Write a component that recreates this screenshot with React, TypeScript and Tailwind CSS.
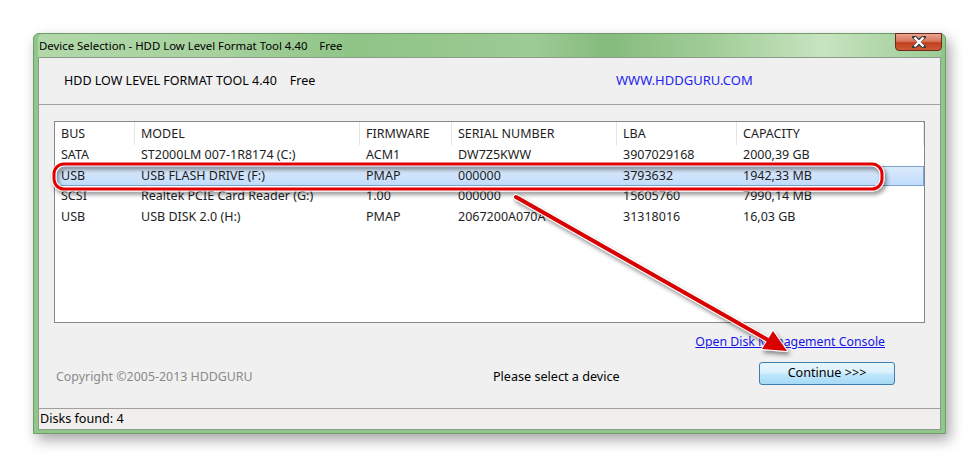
import React from "react";

const rows = [
  { bus: "SATA", model: "ST2000LM 007-1R8174 (C:)", fw: "ACM1", sn: "DW7Z5KWW", lba: "3907029168", cap: "2000,39 GB" },
  { bus: "USB", model: "USB FLASH DRIVE (F:)", fw: "PMAP", sn: "000000", lba: "3793632", cap: "1942,33 MB", sel: true },
  { bus: "SCSI", model: "Realtek PCIE Card Reader (G:)", fw: "1.00", sn: "000000", lba: "15605760", cap: "7990,14 MB" },
  { bus: "USB", model: "USB DISK 2.0 (H:)", fw: "PMAP", sn: "2067200A070A", lba: "31318016", cap: "16,03 GB" },
];

const cols = "grid grid-cols-[80px_225px_92px_165px_120px_1fr]";

export default function App() {
  return (
    <div className="relative w-[980px] h-[468px] overflow-hidden bg-white pl-[33px] pt-[33px] font-['Noto_Sans',sans-serif] text-[12.5px] text-[#1e1e1e]">
      <div className="relative flex h-[401px] w-[913px] flex-col rounded-t-[6px] border border-[#6f9c69] bg-[#8fc68a] px-[4px] pb-[3px] shadow-[4px_6px_14px_rgba(0,0,0,0.35)]">
        {/* title bar */}
        <div className="flex h-[23px] items-center rounded-t-[5px] bg-[linear-gradient(90deg,#b2d8aa_0%,#a6d19d_20%,#8fc487_35%,#9dcb94_55%,#85bb7d_63%,#a2ce99_75%,#c7e4c0_87%,#9ccb93_100%)] pl-[1px] pt-[1px]">
          <span className="text-[11.4px] leading-none text-black">
            Device Selection - HDD Low Level Format Tool 4.40&nbsp;&nbsp;&nbsp;&nbsp;Free
          </span>
        </div>
        {/* close button */}
        <div className="absolute right-[3px] top-[-1px] flex h-[18px] w-[47px] items-center justify-center rounded-b-[4px] border border-[#6b2a1e] bg-[linear-gradient(180deg,#e9a592_0%,#d8765d_45%,#c2401f_55%,#cc5a35_100%)]">
          <svg width="16" height="12" viewBox="0 0 16 12">
            <path d="M3 1 L8 5 L13 1 M3 11 L8 7 L13 11 M8 5 L8 7" stroke="#3a3a3a" strokeWidth="4" fill="none" strokeLinecap="round" />
            <path d="M3.5 1.5 L12.5 10.5 M12.5 1.5 L3.5 10.5" stroke="#ffffff" strokeWidth="2.4" fill="none" />
          </svg>
        </div>
        {/* client */}
        <div className="flex flex-1 flex-col border border-[#8e9a8c] bg-[#f0f0f0]">
          <div className="flex h-[47px] items-center border-b border-[#a0a0a0] pl-[25px] text-black">
            <span className="w-[552px] text-[12.5px]">HDD LOW LEVEL FORMAT TOOL 4.40&nbsp;&nbsp;&nbsp;&nbsp;Free</span>
            <span className="text-[13px] text-[#2424f0]">WWW.HDDGURU.COM</span>
          </div>
          <div className="flex flex-1 flex-col px-[15px] pt-[16px]">
            <div className="h-[202px] w-[871px] border border-[#828790] bg-white">
              <div className={`${cols} h-[23px] items-center`}>
                {["BUS", "MODEL", "FIRMWARE", "SERIAL NUMBER", "LBA", "CAPACITY"].map((h) => (
                  <div key={h} className="flex h-full items-center border-r border-[#e5e5e5] pl-[6px] pt-[1px]">
                    {h}
                  </div>
                ))}
              </div>
              {rows.map((r, i) => (
                <div
                  key={i}
                  className={`${cols} h-[20.5px] items-center ${r.sel ? "border border-[#7da2ce] bg-[linear-gradient(180deg,#dcebfc_0%,#c1dcfc_100%)]" : "border border-transparent"}`}
                >
                  <div className="pl-[5px]">{r.bus}</div>
                  <div className="pl-[5px]">{r.model}</div>
                  <div className="pl-[5px]">{r.fw}</div>
                  <div className="pl-[5px]">{r.sn}</div>
                  <div className="pl-[5px]">{r.lba}</div>
                  <div className="pl-[5px]">{r.cap}</div>
                </div>
              ))}
            </div>
            <div className="mt-[10px] flex w-[831px] justify-end">
              <span className="text-[12.3px] text-[#1414e6] underline">Open Disk Management Console</span>
            </div>
            <div className="mt-[11px] grid grid-cols-[439px_266px_136px] items-start">
              <span className="pl-[2px] pt-[6px] text-[12.4px] text-[#8a8a8a]">Copyright ©2005-2013 HDDGURU</span>
              <span className="pt-[6px] text-[12.6px] text-black">Please select a device</span>
              <div className="flex h-[23px] items-center justify-center rounded-[3px] border border-[#3c7fb1] bg-[linear-gradient(180deg,#eaf6fd_0%,#d9f0fc_45%,#bee6fd_55%,#a7d9f5_100%)] text-[12.6px] text-black">
                Continue &gt;&gt;&gt;
              </div>
            </div>
          </div>
          <div className="flex h-[21px] items-center border-t border-[#a0a0a0] bg-[#f1eeee] pl-[1px] text-[12.6px] text-black">
            Disks found: 4
          </div>
        </div>
      </div>
      {/* annotation overlay */}
      <svg className="pointer-events-none absolute left-0 top-0" width="980" height="468" viewBox="0 0 980 468">
        <defs>
          <filter id="sh" x="-10%" y="-50%" width="130%" height="200%">
            <feDropShadow dx="2" dy="3" stdDeviation="2" floodColor="#000" floodOpacity="0.45" />
          </filter>
        </defs>
        <g filter="url(#sh)">
          <rect x="54" y="164" width="828" height="25" rx="10" fill="none" stroke="#ffffff" strokeWidth="5" />
          <rect x="54" y="164" width="828" height="25" rx="10" fill="none" stroke="#e00000" strokeWidth="3" />
        </g>
        <g filter="url(#sh)">
          <line x1="516" y1="197" x2="768" y2="340" stroke="#ffffff" strokeWidth="6" strokeLinecap="round" />
          <polygon points="787,351 762,349 773,331" fill="#ffffff" stroke="#ffffff" strokeWidth="2" strokeLinejoin="round" />
          <line x1="516" y1="197" x2="768" y2="340" stroke="#d80000" strokeWidth="4" strokeLinecap="round" />
          <polygon points="787,351 762,349 773,331" fill="#d80000" />
        </g>
      </svg>
    </div>
  );
}
